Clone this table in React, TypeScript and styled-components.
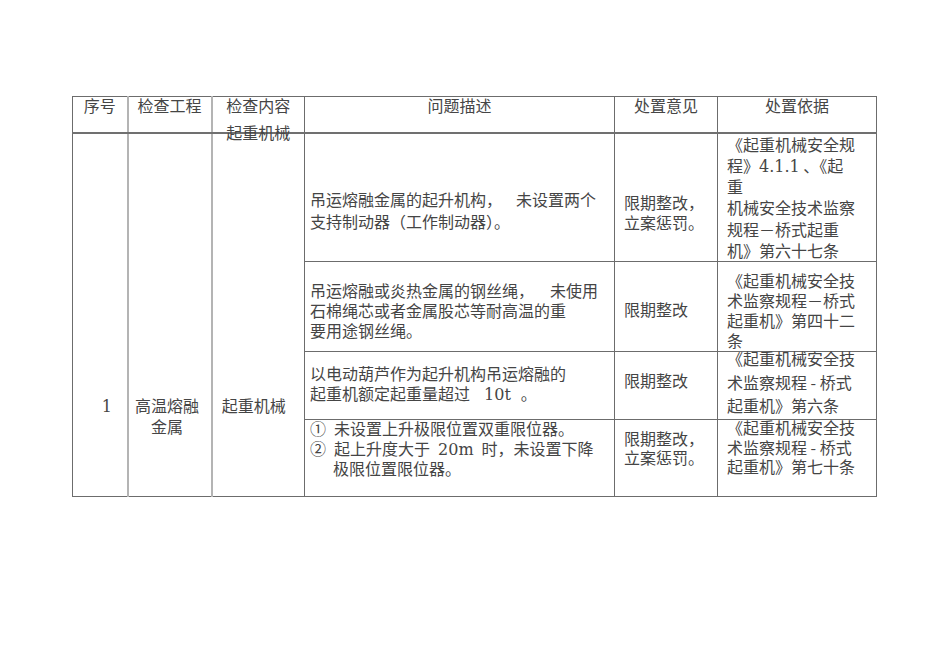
import React from "react";
import styled, { createGlobalStyle } from "styled-components";

// Page reset: white sheet, CJK sans as the body face
const GlobalStyle = createGlobalStyle`
  html, body {
    margin: 0;
    background: #ffffff;
  }
  body {
    font-family: "Noto Sans CJK SC", "Noto Sans CJK JP", sans-serif;
    color: #454545;
  }
`;

const Page = styled.div`
  padding: 96px 0 0 72px;
`;

// The inspection table itself
const Sheet = styled.table`
  border-collapse: collapse;
  table-layout: fixed;
  width: 804px;
  font-size: 16px;
`;

const Col = styled.col<{ $w: number }>`
  width: ${(p) => p.$w}px;
`;

const Row = styled.tr<{ $h: number }>`
  height: ${(p) => p.$h}px;
`;

const DARK = "1px solid #6c6c6c";
const SOFT = "2px solid #b4b4b4";

const HeadCell = styled.th<{ $soft?: boolean }>`
  padding: 0;
  font-weight: normal;
  text-align: center;
  vertical-align: top;
  border: ${DARK};
  border-bottom: 2px solid #707070;
  ${(p) => p.$soft && `border-left: ${SOFT};`}
`;

// Header content keeps the row at its height, the extra label spills below
const HeadStack = styled.div`
  height: 34px;
  overflow: visible;
`;

const Cell = styled.td<{
  $align?: "left" | "center";
  $pl?: number;
  $pr?: number;
  $soft?: boolean;
}>`
  padding: 0 ${(p) => p.$pr ?? 0}px 0 ${(p) => p.$pl ?? 0}px;
  text-align: ${(p) => p.$align ?? "left"};
  vertical-align: top;
  border: ${DARK};
  ${(p) => p.$soft && `border-left: ${SOFT};`}
`;

// Block of text lines, offset from the cell's top edge
const Text = styled.div<{ $top: number; $lh: number }>`
  margin-top: ${(p) => p.$top}px;
  line-height: ${(p) => p.$lh}px;
  white-space: nowrap;
`;

const Line = styled.div<{ $indent?: number }>`
  padding-left: ${(p) => p.$indent ?? 0}px;
`;

// Latin figures are set in a serif face; they must not grow the line box
const Num = styled.span`
  font-family: "DejaVu Serif", "Liberation Serif", serif;
  line-height: 0;
`;

const Gap = styled.span<{ $w: number }>`
  display: inline-block;
  width: ${(p) => p.$w}px;
`;

interface Block {
  top: number;
  lh: number;
  lines: React.ReactNode[];
}

interface Finding {
  height: number;
  problem: Block;
  opinion: Block;
  basis: Block;
}

const findings: Finding[] = [
  {
    height: 128,
    problem: {
      top: 54,
      lh: 22,
      lines: [
        <>
          吊运熔融金属的起升机构，
          <Gap $w={14} />
          未设置两个
        </>,
        "支持制动器（工作制动器）。",
      ],
    },
    opinion: { top: 58, lh: 20, lines: ["限期整改，", "立案惩罚。"] },
    basis: {
      top: 0,
      lh: 21.3,
      lines: [
        "《起重机械安全规",
        <>
          程》<Num>4.1.1</Num> 、《起
        </>,
        "重",
        "机械安全技术监察",
        "规程－桥式起重",
        "机》第六十七条",
      ],
    },
  },
  {
    height: 90,
    problem: {
      top: 18,
      lh: 20,
      lines: [
        <>
          吊运熔融或炎热金属的钢丝绳，
          <Gap $w={16} />
          未使用
        </>,
        "石棉绳芯或者金属股芯等耐高温的重",
        "要用途钢丝绳。",
      ],
    },
    opinion: { top: 37, lh: 20, lines: ["限期整改"] },
    basis: {
      top: 8,
      lh: 20,
      lines: ["《起重机械安全技", "术监察规程－桥式", "起重机》第四十二", "条"],
    },
  },
  {
    height: 68,
    problem: {
      top: 11,
      lh: 20,
      lines: [
        "以电动葫芦作为起升机构吊运熔融的",
        <>
          起重机额定起重量超过
          <Gap $w={14} />
          <Num>10t</Num>
          <Gap $w={10} />。
        </>,
      ],
    },
    opinion: { top: 18, lh: 20, lines: ["限期整改"] },
    basis: {
      top: -5,
      lh: 23.5,
      lines: ["《起重机械安全技", "术监察规程 - 桥式", "起重机》第六条"],
    },
  },
  {
    height: 77,
    problem: {
      top: -2,
      lh: 20,
      lines: [
        <>
          ①<Gap $w={8} />
          未设置上升极限位置双重限位器。
        </>,
        <>
          ②<Gap $w={8} />
          起上升度大于
          <Gap $w={8} />
          <Num>20m</Num>
          <Gap $w={8} />
          时，未设置下降
        </>,
        <Line $indent={23}>极限位置限位器。</Line>,
      ],
    },
    opinion: { top: 9, lh: 19, lines: ["限期整改，", "立案惩罚。"] },
    basis: {
      top: -2,
      lh: 19.5,
      lines: ["《起重机械安全技", "术监察规程 - 桥式", "起重机》第七十条"],
    },
  },
];

const renderBlock = (b: Block) => (
  <Text $top={b.top} $lh={b.lh}>
    {b.lines.map((l, i) => (
      <Line key={i}>{l}</Line>
    ))}
  </Text>
);

export default function App() {
  return (
    <>
      <GlobalStyle />
      <Page>
        <Sheet>
          <colgroup>
            <Col $w={55} />
            <Col $w={84} />
            <Col $w={93} />
            <Col $w={310} />
            <Col $w={103} />
            <Col $w={159} />
          </colgroup>
          <tbody>
            <Row $h={36}>
              <HeadCell>
                <Text $top={-1} $lh={18}>序号</Text>
              </HeadCell>
              <HeadCell $soft>
                <Text $top={-1} $lh={18}>检查工程</Text>
              </HeadCell>
              <HeadCell $soft>
                <HeadStack>
                  <Text $top={-1} $lh={18}>检查内容</Text>
                  <Text $top={9} $lh={18}>起重机械</Text>
                </HeadStack>
              </HeadCell>
              <HeadCell>
                <Text $top={-1} $lh={18}>问题描述</Text>
              </HeadCell>
              <HeadCell>
                <Text $top={-1} $lh={18}>处置意见</Text>
              </HeadCell>
              <HeadCell>
                <Text $top={-1} $lh={18}>处置依据</Text>
              </HeadCell>
            </Row>
            {findings.map((f, index) => (
              <Row $h={f.height} key={index}>
                {index === 0 && (
                  <>
                    <Cell rowSpan={4} $align="center" $pl={14}>
                      <Text $top={261} $lh={21}>
                        <Num>1</Num>
                      </Text>
                    </Cell>
                    <Cell rowSpan={4} $align="center" $pr={5} $soft>
                      <Text $top={261} $lh={21}>
                        <Line>高温熔融</Line>
                        <Line>金属</Line>
                      </Text>
                    </Cell>
                    <Cell rowSpan={4} $align="center" $pr={9} $soft>
                      <Text $top={261} $lh={21}>起重机械</Text>
                    </Cell>
                  </>
                )}
                <Cell $pl={5}>{renderBlock(f.problem)}</Cell>
                <Cell $pl={9}>{renderBlock(f.opinion)}</Cell>
                <Cell $pl={9}>{renderBlock(f.basis)}</Cell>
              </Row>
            ))}
          </tbody>
        </Sheet>
      </Page>
    </>
  );
}
